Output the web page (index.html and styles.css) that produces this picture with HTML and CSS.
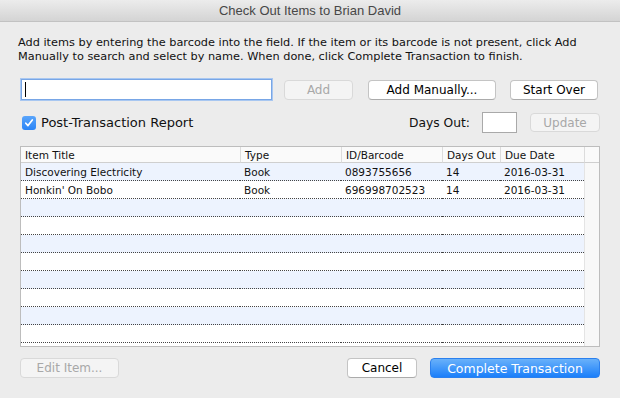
FILE: index.html
```html
<!DOCTYPE html>
<html lang="en">
<head>
  <meta charset="UTF-8" />
  <title>Check Out Items to Brian David</title>
  <link rel="stylesheet" href="styles.css">
</head>
<body>
  <div class="window">
    <div class="titlebar">Check Out Items to Brian David</div>

    <div class="content">
      <p class="intro">Add items by entering the barcode into the field. If the item or its barcode is not present, click Add Manually to search and select by name. When done, click Complete Transaction to finish.</p>

      <!-- barcode entry -->
      <div class="entry-row">
        <div class="barcode"><span class="caret"></span></div>
        <button class="btn btn-add" disabled>Add</button>
        <button class="btn btn-manual">Add Manually...</button>
        <button class="btn btn-over">Start Over</button>
      </div>

      <div class="options-row">
        <label class="check">
          <span class="box">
            <svg width="10" height="10" viewBox="0 0 10 10"><path d="M1.8 5.2 L4 7.6 L8.3 2" fill="none" stroke="#fff" stroke-width="1.7" stroke-linecap="round" stroke-linejoin="round"/></svg>
          </span>
          Post-Transaction Report
        </label>
        <span class="days-label">Days Out:</span>
        <div class="days-box"></div>
        <button class="btn btn-update" disabled>Update</button>
      </div>

      <!-- items list -->
      <div class="list">
        <table>
          <colgroup>
            <col class="c-title"><col class="c-type"><col class="c-id"><col class="c-days"><col class="c-due"><col>
          </colgroup>
          <thead>
            <tr>
              <th>Item Title</th>
              <th>Type</th>
              <th>ID/Barcode</th>
              <th>Days Out</th>
              <th>Due Date</th>
              <th></th>
            </tr>
          </thead>
          <tbody>
            <tr class="odd"><td>Discovering Electricity</td><td>Book</td><td>0893755656</td><td>14</td><td>2016-03-31</td><td class="gutter"></td></tr>
            <tr><td>Honkin' On Bobo</td><td>Book</td><td>696998702523</td><td>14</td><td>2016-03-31</td><td class="gutter"></td></tr>
            <tr class="odd"><td></td><td></td><td></td><td></td><td></td><td class="gutter"></td></tr>
            <tr><td></td><td></td><td></td><td></td><td></td><td class="gutter"></td></tr>
            <tr class="odd"><td></td><td></td><td></td><td></td><td></td><td class="gutter"></td></tr>
            <tr><td></td><td></td><td></td><td></td><td></td><td class="gutter"></td></tr>
            <tr class="odd"><td></td><td></td><td></td><td></td><td></td><td class="gutter"></td></tr>
            <tr><td></td><td></td><td></td><td></td><td></td><td class="gutter"></td></tr>
            <tr class="odd"><td></td><td></td><td></td><td></td><td></td><td class="gutter"></td></tr>
            <tr><td></td><td></td><td></td><td></td><td></td><td class="gutter"></td></tr>
          </tbody>
        </table>
      </div>

      <div class="footer-row">
        <button class="btn btn-edit" disabled>Edit Item...</button>
        <button class="btn btn-cancel">Cancel</button>
        <button class="btn btn-primary">Complete Transaction</button>
      </div>
    </div>
  </div>
</body>
</html>
```

FILE: styles.css
```css
body {
  margin: 0;
  background: #ececec;
  font-family: "DejaVu Sans", sans-serif;
  color: #111;
}
.window {
  width: 620px;
  height: 398px;
  background: #ececec;
  overflow: hidden;
}
.titlebar {
  height: 21px;
  line-height: 21px;
  text-align: center;
  font-family: "Liberation Sans", Arial, sans-serif;
  font-size: 13px;
  color: #474747;
  background: linear-gradient(#ececec, #d4d4d4);
  border-bottom: 1px solid #c2c2c2;
}
.content {
  padding: 0 20px;
}
.intro {
  margin: 14px 0 0 -2px;
  font-size: 11.3px;
  line-height: 14px;
}

/* buttons */
.btn {
  font-family: "DejaVu Sans", sans-serif;
  font-size: 12px;
  height: 20px;
  padding: 0;
  background: #fff;
  color: #000;
  border: 1px solid #c4c4c4;
  border-bottom-color: #ababab;
  border-radius: 4px;
}
.btn:disabled {
  background: #f4f4f4;
  color: #a8a8a8;
  border-color: #d9d9d9;
}
.btn-primary {
  background: linear-gradient(#69b1fa, #1b7ffa);
  border-color: #2b80ee;
  color: #fff;
}

.entry-row {
  display: flex;
  align-items: center;
  margin-top: 14px;
  height: 23px;
}
.barcode {
  width: 249px;
  height: 19px;
  background: #fff;
  border: 1px solid #78a6e6;
  box-shadow: 0 0 0 1px #a8c7f1;
  margin-left: 1px;
  position: relative;
}
.caret {
  position: absolute;
  left: 3px;
  top: 2px;
  width: 1px;
  height: 15px;
  background: #000;
}
.btn-add { width: 69px; margin-left: 12px; }
.btn-manual { width: 128px; margin-left: 15px; }
.btn-over { width: 88px; margin-left: 14px; }

.options-row {
  display: flex;
  align-items: center;
  margin-top: 11px;
  height: 21px;
}
.check {
  display: flex;
  align-items: center;
  font-size: 13px;
  margin-left: 2px;
}
.box {
  width: 14px;
  height: 14px;
  border-radius: 3px;
  background: linear-gradient(#5aa5fb, #2a84f6);
  display: flex;
  align-items: center;
  justify-content: center;
  margin-right: 5px;
}
.days-label {
  margin-left: auto;
  font-size: 12.3px;
}
.days-box {
  width: 33px;
  height: 19px;
  background: #fff;
  border: 1px solid #a9a9a9;
  margin-left: 12px;
}
.btn-update { width: 70px; height: 19px; margin-left: 13px; }

/* list */
.list {
  margin-top: 13px;
  height: 199px;
  border: 1px solid #bdbdbd;
  background: linear-gradient(to right, #fff 563px, #e4e4e4 563px, #e4e4e4 564px, #f8f8f8 564px);
}
table {
  width: 100%;
  border-collapse: separate;
  border-spacing: 0;
  table-layout: fixed;
  font-size: 10.5px;
}
.c-title { width: 219px; }
.c-type { width: 101px; }
.c-id { width: 101px; }
.c-days { width: 58px; }
.c-due { width: 84px; }
th {
  height: 15px;
  padding: 0 0 0 4px;
  font-weight: normal;
  text-align: left;
  background: #fafafa;
  border-bottom: 1px solid #cfcfcf;
  border-left: 1px solid #dcdcdc;
  white-space: nowrap;
}
th:first-child { border-left: none; }
td {
  height: 17px;
  padding: 0 0 0 4px;
  border-bottom: 1px dotted #444;
  white-space: nowrap;
  overflow: hidden;
}
tr.odd td { background: #edf3fe; }
td.gutter,
tr.odd td.gutter {
  background: #f8f8f8;
  border-bottom: none;
  border-left: 1px solid #e4e4e4;
}

.footer-row {
  display: flex;
  align-items: center;
  margin-top: 11px;
}
.btn-edit { width: 99px; }
.btn-cancel { width: 70px; margin-left: auto; }
.btn-primary { width: 170px; margin-left: 13px; font-size: 12.5px; }
```
